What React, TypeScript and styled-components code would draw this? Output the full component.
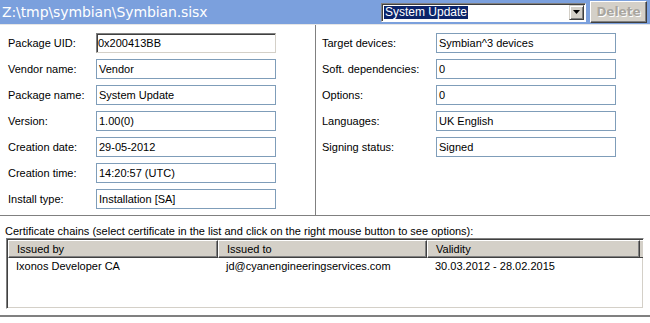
import React from "react";
import styled, { createGlobalStyle, css } from "styled-components";

const GlobalStyle = createGlobalStyle`
  html, body {
    margin: 0;
    padding: 0;
    background: #ffffff;
  }
  body {
    font-family: "Liberation Sans", Tahoma, sans-serif;
    font-size: 11px;
    color: #000000;
  }
`;

type Field = { label: string; value: string; sunken?: boolean };

const leftFields: Field[] = [
  { label: "Package UID:", value: "0x200413BB", sunken: true },
  { label: "Vendor name:", value: "Vendor" },
  { label: "Package name:", value: "System Update" },
  { label: "Version:", value: "1.00(0)" },
  { label: "Creation date:", value: "29-05-2012" },
  { label: "Creation time:", value: "14:20:57 (UTC)" },
  { label: "Install type:", value: "Installation [SA]" },
];

const rightFields: Field[] = [
  { label: "Target devices:", value: "Symbian^3 devices" },
  { label: "Soft. dependencies:", value: "0" },
  { label: "Options:", value: "0" },
  { label: "Languages:", value: "UK English" },
  { label: "Signing status:", value: "Signed" },
];

const columns = [
  { title: "Issued by", width: 210 },
  { title: "Issued to", width: 209 },
  { title: "Validity", width: 213 },
];

const certificates = [
  ["Ixonos Developer CA", "jd@cyanengineeringservices.com", "30.03.2012 - 28.02.2015"],
];

const App = () => {
  return (
    <Window>
      <GlobalStyle />
      <TitleBar>
        <PathText>Z:\tmp\symbian\Symbian.sisx</PathText>
        <Combo>
          <ComboValue>
            <Selected>System Update</Selected>
          </ComboValue>
          <ComboArrow>
            <svg width="7" height="4" viewBox="0 0 7 4">
              <path d="M0 0h7L3.5 4z" fill="#000" />
            </svg>
          </ComboArrow>
        </Combo>
        <DeleteButton disabled>Delete</DeleteButton>
      </TitleBar>

      <Details>
        <Panel $width={316} $labelWidth={88} $padLeft={8} $divider>
          {leftFields.map((f) => (
            <Row key={f.label}>
              <Label>{f.label}</Label>
              <ValueBox $sunken={f.sunken}>{f.value}</ValueBox>
            </Row>
          ))}
        </Panel>
        <Panel $width={334} $labelWidth={114} $padLeft={6}>
          {rightFields.map((f) => (
            <Row key={f.label}>
              <Label>{f.label}</Label>
              <ValueBox>{f.value}</ValueBox>
            </Row>
          ))}
        </Panel>
      </Details>

      <CertSection>
        <CertCaption>
          Certificate chains (select certificate in the list and click on the
          right mouse button to see options):
        </CertCaption>
        <ListBox>
          <HeaderRow>
            {columns.map((c) => (
              <HeaderCell key={c.title} style={{ width: c.width }}>
                {c.title}
              </HeaderCell>
            ))}
            <HeaderRest />
          </HeaderRow>
          {certificates.map((row) => (
            <ListRow key={row[0]}>
              {row.map((cell, i) => (
                <ListCell key={i} style={{ width: columns[i].width }}>
                  {cell}
                </ListCell>
              ))}
            </ListRow>
          ))}
        </ListBox>
      </CertSection>
    </Window>
  );
};

export default App;

const Window = styled.div`
  width: 650px;
  height: 323px;
  overflow: hidden;
  background: #ffffff;
`;

const TitleBar = styled.div`
  height: 25px;
  box-sizing: border-box;
  display: flex;
  align-items: center;
  background: #7ba0dd;
  border-bottom: 1px solid #e6e6e6;
  padding-left: 2px;
`;

const PathText = styled.div`
  flex: 1;
  color: #ffffff;
  font-family: "DejaVu Sans", Verdana, sans-serif;
  font-size: 14px;
  letter-spacing: -0.1px;
  white-space: nowrap;
`;

const Combo = styled.div`
  width: 205px;
  height: 19px;
  box-sizing: border-box;
  display: flex;
  background: #ffffff;
  border-top: 1px solid #808080;
  border-left: 1px solid #808080;
  border-right: 1px solid #ffffff;
  border-bottom: 1px solid #ffffff;
  box-shadow: inset 1px 1px 0 #404040;
  margin-right: 4px;
`;

const ComboValue = styled.div`
  flex: 1;
  display: flex;
  align-items: center;
  padding-left: 2px;
`;

const Selected = styled.span`
  background: #0a246a;
  color: #ffffff;
  font-size: 12px;
  line-height: 13px;
  padding: 0 1px;
`;

const ComboArrow = styled.div`
  width: 15px;
  margin: 1px 1px 1px 0;
  box-sizing: border-box;
  display: flex;
  align-items: center;
  justify-content: center;
  background: #d4d0c8;
  border-top: 1px solid #d4d0c8;
  border-left: 1px solid #d4d0c8;
  border-right: 1px solid #404040;
  border-bottom: 1px solid #404040;
  box-shadow: inset 1px 1px 0 #ffffff, inset -1px -1px 0 #808080;
`;

const DeleteButton = styled.button`
  width: 57px;
  height: 22px;
  margin-right: 3px;
  padding: 0;
  font-family: "DejaVu Sans", Tahoma, sans-serif;
  font-size: 12px;
  font-weight: bold;
  color: #a9a69f;
  text-shadow: 1px 1px 0 #ffffff;
  background: #d4d0c8;
  border-top: 1px solid #ffffff;
  border-left: 1px solid #ffffff;
  border-right: 1px solid #404040;
  border-bottom: 1px solid #404040;
  box-shadow: inset -1px -1px 0 #808080;
`;

const Details = styled.div`
  display: flex;
  height: 190px;
  border-bottom: 1px solid #808080;
`;

const Panel = styled.div<{
  $width: number;
  $labelWidth: number;
  $padLeft: number;
  $divider?: boolean;
}>`
  width: ${(p) => p.$width}px;
  box-sizing: border-box;
  padding: 8px 0 0 ${(p) => p.$padLeft}px;
  display: flex;
  flex-direction: column;
  gap: 6px;
  --label-width: ${(p) => p.$labelWidth}px;
  ${(p) =>
    p.$divider &&
    css`
      border-right: 1px solid #808080;
    `}
`;

const Row = styled.div`
  display: flex;
  align-items: center;
  height: 20px;
`;

const Label = styled.div`
  width: var(--label-width);
  flex-shrink: 0;
  white-space: nowrap;
`;

const ValueBox = styled.div<{ $sunken?: boolean }>`
  width: 180px;
  height: 20px;
  box-sizing: border-box;
  display: flex;
  align-items: center;
  padding-left: 2px;
  white-space: nowrap;
  background: #ffffff;
  border: 1px solid #7f9db9;
  ${(p) =>
    p.$sunken &&
    css`
      border-top: 1px solid #808080;
      border-left: 1px solid #808080;
      border-right: 1px solid #d4d0c8;
      border-bottom: 1px solid #d4d0c8;
      box-shadow: inset 1px 1px 0 #404040;
      padding-left: 1px;
    `}
`;

const CertSection = styled.div`
  padding: 8px 6px 0 6px;
  height: 101px;
  box-sizing: border-box;
  border-bottom: 2px solid #808080;
`;

const CertCaption = styled.div`
  line-height: 14px;
  margin-left: -1px;
  white-space: nowrap;
`;

const ListBox = styled.div`
  height: 71px;
  box-sizing: border-box;
  border-top: 1px solid #808080;
  border-left: 1px solid #808080;
  border-right: 1px solid #ffffff;
  border-bottom: 1px solid #ffffff;
  box-shadow: inset 1px 1px 0 #404040, inset -1px -1px 0 #d4d0c8;
  padding: 1px 0 0 1px;
  overflow: hidden;
`;

const HeaderRow = styled.div`
  display: flex;
  height: 18px;
  background: #d4d0c8;
`;

const HeaderCell = styled.div`
  box-sizing: border-box;
  padding-left: 8px;
  display: flex;
  align-items: center;
  border-top: 1px solid #ffffff;
  border-left: 1px solid #ffffff;
  border-right: 1px solid #404040;
  border-bottom: 1px solid #404040;
  box-shadow: inset -1px -1px 0 #808080;
  white-space: nowrap;
`;

const HeaderRest = styled.div`
  flex: 1;
  border-top: 1px solid #ffffff;
  border-bottom: 1px solid #404040;
`;

const ListRow = styled.div`
  display: flex;
  height: 16px;
  align-items: center;
`;

const ListCell = styled.div`
  box-sizing: border-box;
  padding-left: 8px;
  white-space: nowrap;
`;
